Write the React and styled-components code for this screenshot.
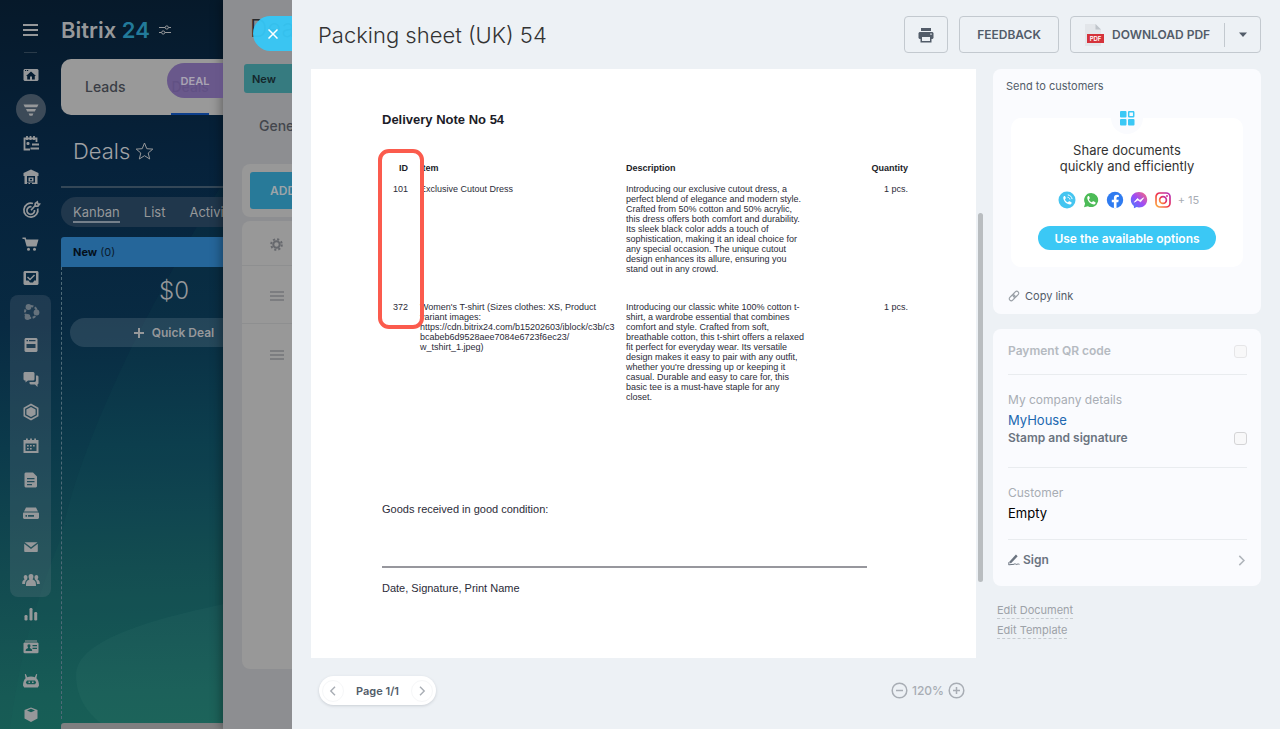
import React from "react";
import styled, { createGlobalStyle, css } from "styled-components";

const GlobalStyle = createGlobalStyle`
  *, *::before, *::after { box-sizing: border-box; }
  html, body { margin: 0; height: 100%; }
  body {
    font-family: Inter, "Liberation Sans", sans-serif;
    overflow: hidden;
    background: #06223a;
  }
  #root { height: 100%; }
  button { font: inherit; color: inherit; background: none; border: 0; padding: 0; cursor: pointer; }
  a { color: inherit; text-decoration: none; }
  h1, h2, p, ul { margin: 0; padding: 0; font-weight: inherit; }
  svg { display: block; flex: none; }
`;

/* ---------- CRM page under the sliders ---------- */

const Page = styled.div`
  position: relative;
  display: flex;
  height: 100vh;
  overflow: hidden;
  color: #96989a;
  background: linear-gradient(178deg, #06192a 0%, #06223b 22%, #082a42 42%, #0b3a4b 58%, #124a50 74%, #175a55 90%, #186055 100%);
`;

const Backdrop = styled.svg`
  position: absolute;
  inset: 0;
  width: 300px;
  height: 100%;
`;

const MenuBar = styled.nav`
  position: relative;
  width: 61px;
  flex: none;
  display: flex;
  flex-direction: column;
  align-items: center;
`;

const MenuToggle = styled.button`
  display: grid;
  place-items: center;
  width: 40px;
  height: 52px;
  padding-top: 8px;
  flex: none;
`;

const MenuRule = styled.hr`
  width: 13px;
  height: 1px;
  margin: 0 0 5px;
  border: 0;
  background: #2a3b4a;
  flex: none;
`;

const MenuGroup = styled.div`
  display: flex;
  flex-direction: column;
  align-items: center;
  flex: none;
  width: 41px;
  height: ${(p) => p.$height}px;
  border-radius: 8px;
  ${(p) => p.$boxed && css`background: rgba(150, 150, 160, 0.17);`}
`;

const MenuLink = styled.a`
  flex: 1;
  display: grid;
  place-items: center;
  opacity: ${(p) => (p.$dim ? 0.6 : 1)};
`;

const IconDisc = styled.span`
  display: grid;
  place-items: center;
  width: 30px;
  height: 30px;
  border-radius: 50%;
  background: ${(p) => (p.$active ? "#3c4a58" : "transparent")};
`;

const Workspace = styled.main`
  position: relative;
  flex: 1;
  min-width: 0;
  display: flex;
  flex-direction: column;
`;

const Brand = styled.div`
  display: flex;
  align-items: center;
  gap: 9px;
  height: 59px;
  font-size: 22px;
  line-height: 26px;
  font-weight: 600;
  span { color: #227a9a; }
`;

const EntityTabs = styled.nav`
  display: flex;
  gap: 46px;
  height: 56px;
  padding: 0 24px;
  border-radius: 10px 0 0 10px;
  background: #999999;
  color: #3a3d45;
`;

const EntityTab = styled.a`
  font-size: 14px;
  font-weight: 500;
  line-height: 56px;
  border-bottom: 2px solid ${(p) => (p.$active ? "#0d3f8c" : "transparent")};
`;

const TitleRow = styled.div`
  display: flex;
  align-items: center;
  gap: 5px;
  height: 73px;
  padding-left: 12px;
  border-bottom: 2px solid #344757;
  h1 { font-size: 22px; line-height: 30px; font-weight: 300; color: #a0a2a5; }
`;

const CreateButton = styled.button`
  width: 120px;
  height: 38px;
  margin-left: 64px;
  border-radius: 4px;
  background: #7b9a10;
`;

const Views = styled.nav`
  display: flex;
  gap: 24px;
  height: 30px;
  margin: 9px 0 10px;
  padding: 0 12px;
  border-radius: 15px 0 0 15px;
  background: #20374c;
  font-size: 13px;
  line-height: 30px;
`;

const ViewLink = styled.a`
  line-height: 24px;
  height: 26px;
  padding-top: 3px;
  border-bottom: 2px solid ${(p) => (p.$active ? "#75808b" : "transparent")};
`;

const Column = styled.section`
  flex: 1;
  width: 226px;
  min-height: 0;
  display: flex;
  flex-direction: column;
`;

const ColumnHead = styled.header`
  height: 30px;
  padding-left: 12px;
  border-radius: 3px 0 0 0;
  background: #25669a;
  color: #0b1b2b;
  font-size: 11px;
  line-height: 30px;
  b { font-weight: 700; color: #04101c; }
`;

const ColumnBody = styled.div`
  flex: 1;
  display: flex;
  flex-direction: column;
  gap: 13px;
  padding: 10px 9px 0 8px;
  border-left: 1px dashed #4f6a78;
`;

const Total = styled.div`
  font-size: 24px;
  line-height: 28px;
  font-weight: 300;
  text-align: center;
`;

const QuickDeal = styled.button`
  display: flex;
  align-items: center;
  justify-content: center;
  gap: 8px;
  height: 29px;
  border-radius: 15px;
  background: rgba(130, 145, 160, 0.23);
  font-size: 12px;
  font-weight: 600;
`;

const ScrollTrack = styled.div`
  height: 6px;
  margin-top: 4px;
  border-radius: 3px 0 0 0;
  background: #7f7f80;
`;

/* ---------- deal slider ---------- */

const DealPanel = styled.aside`
  position: absolute;
  inset: 0 0 0 223px;
  padding: 0 0 60px 19px;
  display: flex;
  flex-direction: column;
  background: #8d8e91;
  box-shadow: -2px 0 10px rgba(0, 0, 0, 0.35);
  color: #43464d;
`;

const SideTab = styled.button`
  position: absolute;
  top: ${(p) => p.$top}px;
  right: 100%;
  height: 35px;
  width: ${(p) => p.$width}px;
  display: grid;
  place-items: center;
  border-radius: 18px 0 0 18px;
  background: ${(p) => p.$tone};
  color: ${(p) => p.$ink};
  font-size: 11px;
  font-weight: 600;
`;

const DealTitle = styled.h2`
  padding: 14px 0 0 8px;
  font-size: 24px;
  line-height: 30px;
  font-weight: 300;
  color: #26282c;
`;

const Stage = styled.div`
  margin: 20px 0 0 2px;
  padding-left: 8px;
  height: 29px;
  border-radius: 3px;
  background: #367b80;
  color: #14262b;
  font-size: 11px;
  font-weight: 600;
  line-height: 30px;
`;

const DealTabs = styled.div`
  padding: 18px 0 0 17px;
  height: 71px;
  font-size: 14px;
  font-weight: 500;
  line-height: 30px;
`;

const DealCard = styled.div`
  flex: ${(p) => (p.$grow ? 1 : "none")};
  padding: ${(p) => (p.$grow ? 0 : 8)}px;
  margin-bottom: ${(p) => (p.$grow ? 0 : 4)}px;
  border-radius: 8px;
  background: #989898;
`;

const AddButton = styled.button`
  width: 160px;
  height: 37px;
  padding-left: 20px;
  border-radius: 3px;
  background: #287a99;
  color: #9da4a8;
  font-size: 12px;
  font-weight: 600;
  text-align: left;
`;

const DealRow = styled.div`
  display: flex;
  align-items: center;
  height: ${(p) => p.$height}px;
  padding: 2px 0 0 28px;
  border-bottom: 1px solid ${(p) => (p.$last ? "transparent" : "#8e8f90")};
  color: ${(p) => (p.$head ? "#66686d" : "#7c7d80")};
`;

/* ---------- document slider ---------- */

const DocPanel = styled.section`
  position: absolute;
  inset: 0 0 0 292px;
  padding: 0 19px;
  display: flex;
  flex-direction: column;
  background: #edf1f5;
  color: #525c69;
`;

const DocHeader = styled.header`
  display: flex;
  align-items: center;
  gap: 11px;
  height: 69px;
  flex: none;
  padding-left: 7px;
  h1 {
    flex: 1;
    font-size: 22px;
    line-height: 30px;
    font-weight: 300;
    color: #333333;
    white-space: nowrap;
  }
`;

const outline = css`
  height: 37px;
  border: 1px solid #c3c9cf;
  border-radius: 4px;
  color: #525c69;
  font-size: 12px;
  font-weight: 600;
  white-space: nowrap;
`;

const OutlineButton = styled.button`
  ${outline}
  width: ${(p) => p.$width}px;
  display: grid;
  place-items: center;
`;

const SplitButton = styled.div`
  ${outline}
  width: 191px;
  display: flex;
  align-items: center;
`;

const SplitMain = styled.button`
  flex: 1;
  display: flex;
  align-items: center;
  gap: 8px;
  padding-left: 13px;
`;

const SplitMore = styled.button`
  display: grid;
  place-items: center;
  width: 36px;
  height: 24px;
  border-left: 1px solid #c3c9cf;
`;

const DocBody = styled.div`
  display: grid;
  grid-template-columns: minmax(0, 1fr) 268px;
  gap: 17px;
  align-items: start;
`;

const SheetFrame = styled.div`
  position: relative;
`;

const Sheet = styled.article`
  min-height: 589px;
  padding: 43px 68px 60px 71px;
  background: #ffffff;
  color: #2b2b38;
  font-family: "Liberation Sans", Arial, sans-serif;
  h2 { font-size: 13px; line-height: 16px; font-weight: 700; color: #1c1c28; }
  p { font-size: 11px; line-height: 14px; }
`;

const SheetScroll = styled.div`
  position: absolute;
  top: 144px;
  right: -7px;
  width: 5px;
  height: 369px;
  border-radius: 3px;
  background: #b9bdc0;
`;

const TableWrap = styled.div`
  position: relative;
  margin: 35px 0 72px;
`;

const Goods = styled.table`
  width: 526px;
  border-collapse: collapse;
  font-size: 9px;
  line-height: 10px;
  white-space: nowrap;
  th, td { padding: 0 0 11px; vertical-align: top; text-align: left; font-weight: 400; }
  th { font-weight: 700; color: #1c1c28; }
  tbody td { padding-bottom: 28px; }
  th:first-child, td:first-child, th:last-child, td:last-child { text-align: right; }
  th:nth-child(2), td:nth-child(2) { padding-left: 12px; }
`;

const Marker = styled.div`
  position: absolute;
  top: -14px;
  left: -4px;
  width: 46px;
  height: 180px;
  border: 4px solid #fb5b4d;
  border-radius: 11px;
`;

const SignLine = styled.hr`
  width: 485px;
  margin: 50px 0 13px;
  border: 0;
  border-top: 2px solid #97979d;
`;

const Side = styled.aside`
  display: flex;
  flex-direction: column;
`;

const Card = styled.section`
  margin-bottom: 15px;
  padding: ${(p) => p.$pad};
  border-radius: 8px;
  background: #fafbfe;
`;

const CardLabel = styled.p`
  font-size: 11px;
  line-height: 14px;
`;

const ShareBox = styled.div`
  position: relative;
  margin: 25px 5px 22px;
  padding: 24px 0 17px;
  display: flex;
  flex-direction: column;
  align-items: center;
  border-radius: 10px;
  background: #ffffff;
  p { font-size: 13px; line-height: 16px; color: #333333; text-align: center; }
`;

const ShareBadge = styled.span`
  position: absolute;
  top: -16px;
  left: calc(50% - 16px);
  width: 32px;
  height: 32px;
  display: grid;
  place-items: center;
  border-radius: 50%;
  background: #fafbfe;
`;

const Channels = styled.div`
  display: flex;
  align-items: center;
  gap: 6px;
  margin: 17px 0;
  padding-left: 3px;
  font-size: 11px;
  line-height: 18px;
  color: #a8adb4;
`;

const ShareButton = styled.button`
  height: 24px;
  width: 178px;
  border-radius: 12px;
  background: #3bc8f5;
  color: #ffffff;
  font-size: 12px;
  font-weight: 600;
`;

const CopyLink = styled.button`
  display: flex;
  align-items: center;
  gap: 5px;
  margin-left: 2px;
  font-size: 11px;
  line-height: 14px;
`;

const Block = styled.div`
  padding: ${(p) => p.$pad};
  border-bottom: 1px solid ${(p) => (p.$last ? "transparent" : "#e9ecef")};
  font-size: 13px;
  line-height: 18px;
`;

const Caption = styled.p`
  color: #a8adb4;
  line-height: 20px;
  font-size: 12px;
`;

const Value = styled.a`
  display: block;
  line-height: 20px;
  color: ${(p) => (p.$link ? "#2067b0" : "#000000")};
`;

const CheckRow = styled.label`
  display: flex;
  align-items: center;
  justify-content: space-between;
  font-size: 12px;
  font-weight: 600;
  line-height: 16px;
  color: ${(p) => (p.$muted ? "#b5bac1" : "#6b7480")};
  input {
    appearance: none;
    width: 13px;
    height: 13px;
    margin: 0;
    border: 1px solid ${(p) => (p.$muted ? "#e6e6e8" : "#d4d4d6")};
    border-radius: 3px;
    background: #f8f8f9;
  }
`;

const SignButton = styled.button`
  display: flex;
  align-items: center;
  gap: 3px;
  width: 100%;
  font-size: 12px;
  font-weight: 600;
  line-height: 16px;
  color: #6b7480;
  span { flex: 1; text-align: left; }
  svg:last-child { color: #b0b5bb; }
`;

const EditLinks = styled.div`
  display: flex;
  flex-direction: column;
  align-items: flex-start;
  gap: 4px;
  padding: 2px 4px;
  font-size: 11px;
  line-height: 15px;
  color: #9da2a8;
  a { border-bottom: 1px dashed #c6cbd0; }
`;

const DocFooter = styled.footer`
  display: flex;
  align-items: center;
  justify-content: space-between;
  margin-top: 18px;
  padding: 0 11px 0 8px;
`;

const Pager = styled.div`
  display: flex;
  align-items: center;
  justify-content: space-between;
  width: 117px;
  height: 29px;
  padding: 0 3px;
  border-radius: 15px;
  background: #ffffff;
  box-shadow: 0 1px 3px rgba(80, 90, 105, 0.22);
  font-size: 11px;
  font-weight: 600;
`;

const PagerArrow = styled.button`
  display: grid;
  place-items: center;
  width: 22px;
  height: 22px;
  border: 1px solid #f6f7f8;
  border-radius: 50%;
  color: #a8adb4;
`;

const Zoom = styled.div`
  display: flex;
  align-items: center;
  gap: 4px;
  font-size: 12px;
  font-weight: 500;
  color: #a8adb4;
`;

/* ---------- icons ---------- */

const glyphs = {
  home: <path fillRule="evenodd" d="M3.500 4h13l1 1v10l-1 1h-13l-1-1V5zM10 6.500l5 4.500h-1.200V14.500H11v-3H9v3H6.200V11H5zM4 5v1h1.200V5zM6 5v1h1.200V5z" />,
  funnel: <path d="M2.500 5.500h15l-1.400 2.800H3.900zM5 10h10l-1.200 2.400H6.200zM7.600 14.500h4.800l-1 2.200H8.600z" />,
  tasks: (
    <g fill="none" stroke="currentColor" strokeWidth="1.800">
      <path d="M9 16.500H3.500v-11h12V9M6 3v4M9.500 3v4M13 3v4M5.500 10.500h3M7 9v3" />
      <path d="M11 11.500h7M9.500 15.500h8.500M9.500 11.500h.1" />
    </g>
  ),
  store: <path fillRule="evenodd" d="M10 2.500 17.500 6v3H16.500v8h-13V9h-1V6zM6 9h8v6.500H6zM7.500 10.500h5V14.500h-5zM9 11.800h2v1.500H9zM6 15h1.500v2H6zM9 15h2v2H9z" />,
  target: (
    <g fill="none" stroke="currentColor" strokeWidth="1.700">
      <path d="M12 3.500A7 7 0 1 0 16.700 8.500" />
      <path d="M10.500 6.800A3.800 3.800 0 1 0 13.500 10" />
      <path d="m10 10.300 4-4.500M14 6l.3-2.600L16.300 2l.4 1.800 1.800.3-1.600 2.100z" />
    </g>
  ),
  cart: (
    <g>
      <path d="M1.500 3.500h3.200l.6 2h12.200l-2 7H5.700L3.500 5H1.500z" />
      <circle cx="7.500" cy="15.300" r="1.500" /><circle cx="13.500" cy="15.300" r="1.500" />
    </g>
  ),
  check: <path fillRule="evenodd" d="M3.500 3h13l1 1v12l-1 1h-13l-1-1V4zM5 5v7.500h2.500L9 14.500h3l1.200-2H15V5zM7 8.500l2 2 4-4 1 1-5 5L6 9.500z" />,
  nodes: (
    <g>
      <circle cx="7.500" cy="5" r="2.900" /><circle cx="15.500" cy="10.500" r="2.900" /><circle cx="6.500" cy="15" r="2.900" />
      <circle cx="10" cy="10" r="6" fill="none" stroke="currentColor" strokeWidth="2" strokeDasharray="3 1.500" />
    </g>
  ),
  feed: <path fillRule="evenodd" d="M4.500 3h11l1 1v12l-1 1h-11l-1-1V4zM5.500 5v1.300h1.500V5zM8 5v1.300h6.500V5zM5.500 9h9v4h-9z" />,
  chat: <path d="M3.500 3h9l1 1v6.500l-1 1H7l-2.500 2v-2h-1l-1-1V4zM15 6.500h1.500l1 1v7l-1 1V18l-2.500-2.500H9.500l-1-1V13H14l1-1z" />,
  hex: (
    <g>
      <path d="m10 2.500 6.700 3.800v7.500L10 17.500l-6.700-3.700V6.300z" fill="none" stroke="currentColor" strokeWidth="1.600" />
      <path d="m10 5 4.600 2.500v5L10 15l-4.600-2.500v-5z" />
    </g>
  ),
  calendar: <path fillRule="evenodd" d="M5 2.500h1.800V4h2.300V2.500h1.800V4h2.300V2.500H15V4h2.500v13h-15V4H5zM4.500 7.500v7.500h11V7.500zM6 9h1.700v1.500H6zM9 9h1.700v1.500H9zM12 9h1.700v1.500H12zM6 12h1.700v1.500H6zM9 12h1.700v1.500H9z" />,
  file: <path fillRule="evenodd" d="M4.500 2.500H12l4 4v10l-1 1H4.500l-1-1v-13zM6 8v1.300h7.500V8zM6 11v1.300h7.500V11zM6 14v1.300h5V14z" />,
  drive: <path fillRule="evenodd" d="M5 4.500h10l2 4H3zM2.500 9.500h15l.5 1V15l-1 1H3l-1-1v-4.500zM4.500 12v1.700H6V12zM7 12v1.700h6V12z" />,
  mail: <path d="M3.500 5.200h13L10 10.300zM3.200 6.700 10 12l6.800-5.300V14.500l-.8.500H4l-.8-.5z" />,
  people: (
    <g>
      <path d="M10 4c2 0 2.700 1.400 2.400 3.300L11.600 9.500c3 1 3.400 2.500 3.400 6.500H5c0-4 .4-5.500 3.400-6.500L7.600 7.300C7.300 5.400 8 4 10 4z" />
      <path d="M4.500 5c1.300 0 2 .9 2 2.500L6 9.500C4.300 11 4.200 12 4 14H1.200c0-3 .5-3.800 2.300-4.600l-.8-1.900c0-1.600.6-2.500 1.800-2.500zM15.500 5c-1.300 0-2 .9-2 2.500l.5 2c1.700 1.500 1.800 2.500 2 4.500h2.800c0-3-.5-3.800-2.300-4.600l.8-1.900c0-1.600-.6-2.500-1.800-2.500z" />
    </g>
  ),
  bars: (
    <g>
      <rect x="3.500" y="11" width="3" height="5.500" rx="1.200" /><rect x="8.500" y="4" width="3" height="12.500" rx="1.200" /><rect x="13.200" y="8" width="3" height="8.500" rx="1.200" />
    </g>
  ),
  contact: <path fillRule="evenodd" d="M4 3.500h12V4.500H4zM3.500 5.500h13l1 .8v9.200l-1 .7h-13l-1-.7V6.300zM8 7.300c-1.200 0-1.700.9-1.500 2l.7 1.700c-1.700.6-2.500 1.200-2.600 3h6.600c-.1-1.800-.9-2.400-2.500-3l.7-1.700c.2-1.100-.2-2-1.400-2zM11.500 8v1.200H16V8zM11.500 10.700v1.200H16v-1.200z" />,
  robot: <path fillRule="evenodd" d="m4.800 3 1.400 3.200c2-1 5.600-1 7.600 0L15.200 3l1 .3-.8 4c1.600 1.400 2.600 4 2.600 7.200l-1.200 2H3.200L2 14.500c0-3.200 1-5.800 2.600-7.200l-.8-4zM6 9.500l-1.200 2L6 13.200h8l1.200-1.700-1.200-2zM7.500 10.500h1.600v1.600H7.500zM11 10.500h1.600v1.600H11z" />,
  box: <path fillRule="evenodd" d="m10 3.500 6.500 2.500V14.500L10 18 3.500 14.500V6zM10 4.800 6 6.400 10 8.300l4-1.900z" />,
};

const Glyph = ({ name }) => (
  <svg width="20" height="20" viewBox="0 0 20 20" fill="currentColor">{glyphs[name]}</svg>
);

const Burger = ({ size, step, weight }) => (
  <svg width={size} height={step * 2 + weight} fill="currentColor">
    {[0, 1, 2].map((i) => <rect key={i} y={i * step} width={size} height={weight} />)}
  </svg>
);

const Chevron = ({ flip, size = 10 }) => (
  <svg width={size} height={size} viewBox="0 0 10 10" fill="none" stroke="currentColor" strokeWidth="1.400">
    <path d={flip ? "M7 .8 2.800 5 7 9.200" : "M3 .8 7.200 5 3 9.200"} />
  </svg>
);

const handset = "M6.300 5.100c-1 .7-1.300 1.700-.8 3.100.9 2.500 2.600 4.300 5.200 5.100 1.200.4 2.400 0 2.900-1.100.2-.5.1-.8-.3-1l-1.700-.9c-.4-.2-.7-.1-1 .3l-.6.7c-1.500-.5-2.500-1.500-3.100-2.900l.7-.8c.2-.3.3-.5.2-.8l-.7-1.600c-.2-.4-.5-.4-.8-.1z";

const CallIcon = () => (
  <svg width="18" height="18" viewBox="0 0 18 18">
    <circle cx="9" cy="9" r="8.500" fill="#45c5f0" />
    <path d={handset} fill="#fff" />
    <path d="M9.500 6.200c1.300.1 2.200 1 2.400 2.300M9.800 3.900c2.300.2 4 1.900 4.300 4.200" fill="none" stroke="#fff" strokeWidth="1" />
  </svg>
);

const WhatsAppIcon = () => (
  <svg width="18" height="18" viewBox="0 0 18 18">
    <path d="M9.200 2a7 7 0 1 1-3.300 13.200L2 16.200l1.100-3.700A7 7 0 0 1 9.200 2z" fill="#4cbb57" />
    <path d={handset} fill="#fff" />
  </svg>
);

const FacebookIcon = () => (
  <svg width="18" height="18" viewBox="0 0 18 18">
    <circle cx="9" cy="9" r="8.200" fill="#2f7bf0" />
    <path d="M7.900 17.100v-5.900H5.800V8.800h2.100V7c0-2.200 1.300-3.300 3.200-3.300l1.700.2v2h-1c-1 0-1.300.6-1.300 1.300v1.600h2.200l-.4 2.400h-1.800v5.900z" fill="#fff" />
  </svg>
);

const MessengerIcon = () => (
  <svg width="18" height="18" viewBox="0 0 18 18">
    <defs>
      <linearGradient id="messenger" x1="0" y1="1" x2="1" y2="0">
        <stop offset="0" stopColor="#3b7dff" /><stop offset=".5" stopColor="#a04cf5" /><stop offset="1" stopColor="#ff6a72" />
      </linearGradient>
    </defs>
    <path d="M9 .9c4.700 0 8.200 3.300 8.200 7.800s-3.500 7.700-8.200 7.700l-2.300-.3-2.800 1.200V15C2 13.500.8 11.400.8 8.700.8 4.200 4.300.9 9 .9z" fill="url(#messenger)" />
    <path d="m4.400 11.200 3-3.700L9.900 9.400l3.700-2.600-3 4-2.700-1.900z" fill="#fff" stroke="#fff" strokeWidth=".8" strokeLinejoin="round" />
  </svg>
);

const InstagramIcon = () => (
  <svg width="18" height="18" viewBox="0 0 18 18" fill="none">
    <defs>
      <linearGradient id="instagram" x1="0" y1="1" x2="1" y2="0">
        <stop offset="0" stopColor="#fdb13f" /><stop offset=".5" stopColor="#f0324b" /><stop offset="1" stopColor="#b132c4" />
      </linearGradient>
    </defs>
    <g stroke="url(#instagram)" strokeWidth="1.700">
      <rect x="2" y="2" width="14" height="14" rx="3.800" />
      <circle cx="9" cy="9" r="3.400" />
    </g>
    <circle cx="13" cy="5" r="1" fill="#d63384" />
  </svg>
);

const PdfIcon = () => (
  <svg width="20" height="22" viewBox="0 0 20 22">
    <path d="M1 0h10.500L17 5.500V22H1z" fill="#e3e6ea" />
    <path d="M11.500 0 17 5.500h-5.500z" fill="#bfc4ca" />
    <rect x="3" y="10" width="17" height="9" fill="#d5333b" />
    <text x="11.500" y="17" fontSize="6" fontWeight="600" fill="#fff" textAnchor="middle" fontFamily="Inter, sans-serif">PDF</text>
  </svg>
);

const PrinterIcon = () => (
  <svg width="16" height="16" viewBox="0 0 16 16" fill="currentColor">
    <path d="M3 1h10v3H3z" />
    <path fillRule="evenodd" d="M1.500 5h13l1 1v5l-1 1H13.500v3.500h-11V12H1.500l-1-1V6zM4 10v4h8v-4zM12.300 6.500v1.300h1.400V6.500z" />
  </svg>
);

const ZoomIcon = ({ plus }) => (
  <svg width="17" height="17" viewBox="0 0 17 17" fill="none" stroke="currentColor" strokeWidth="1.500">
    <circle cx="8.500" cy="8.500" r="7.300" />
    <path d={plus ? "M5 8.500h7M8.500 5v7" : "M5 8.500h7"} />
  </svg>
);

/* ---------- data ---------- */

const menu = [
  { height: 237, items: ["home", "funnel", "tasks", "store", "target", "cart", "check"] },
  { height: 302, boxed: true, items: ["nodes", "feed", "chat", "hex", "calendar", "file", "drive", "mail", "people"] },
  { height: 134, items: ["bars", "contact", "robot", "box"] },
];

const goods = [
  {
    id: 101,
    item: ["Exclusive Cutout Dress"],
    text: [
      "Introducing our exclusive cutout dress, a", "perfect blend of elegance and modern style.",
      "Crafted from 50% cotton and 50% acrylic,", "this dress offers both comfort and durability.",
      "Its sleek black color adds a touch of", "sophistication, making it an ideal choice for",
      "any special occasion. The unique cutout", "design enhances its allure, ensuring you", "stand out in any crowd.",
    ],
  },
  {
    id: 372,
    item: [
      "Women's T-shirt (Sizes clothes: XS, Product", "variant images:",
      "https://cdn.bitrix24.com/b15202603/iblock/c3b/c3", "bcabeb6d9528aee7084e6723f6ec23/", "w_tshirt_1.jpeg)",
    ],
    text: [
      "Introducing our classic white 100% cotton t-", "shirt, a wardrobe essential that combines",
      "comfort and style. Crafted from soft,", "breathable cotton, this t-shirt offers a relaxed",
      "fit perfect for everyday wear. Its versatile", "design makes it easy to pair with any outfit,",
      "whether you're dressing up or keeping it", "casual. Durable and easy to care for, this",
      "basic tee is a must-have staple for any", "closet.",
    ],
  },
];

const Lines = ({ of }) => of.map((line, i) => <React.Fragment key={line}>{i > 0 && <br />}{line}</React.Fragment>);

/* ---------- app ---------- */

export default function App() {
  return (
    <>
      <GlobalStyle />
      <Page>
        <Backdrop viewBox="0 0 300 729" preserveAspectRatio="none">
          <path d="M300 60C190 230 90 400 60 540 20 640 15 700 10 729H300z" fill="#2f8a7a" opacity=".05" />
          <path d="M300 590C150 615 76 640 76 675c0 30 20 45 32 54H300z" fill="#9adbc0" opacity=".04" />
        </Backdrop>

        <MenuBar aria-label="Main menu">
          <MenuToggle aria-label="Toggle menu"><Burger size={15} step={5} weight={2} /></MenuToggle>
          <MenuRule />
          {menu.map((group) => (
            <MenuGroup key={group.height} $height={group.height} $boxed={group.boxed}>
              {group.items.map((name) => (
                <MenuLink key={name} href="#" aria-label={name} $dim={name === "nodes"}>
                  <IconDisc $active={name === "funnel"}><Glyph name={name} /></IconDisc>
                </MenuLink>
              ))}
            </MenuGroup>
          ))}
        </MenuBar>

        <Workspace>
          <Brand>
            <div>Bitrix <span>24</span></div>
            <svg width="12" height="10" viewBox="0 0 12 10" fill="none" stroke="currentColor" strokeWidth="1">
              <path d="M0 2.500h6M9.500 2.500H12M0 7.500h2.500M6 7.500h6" />
              <circle cx="7.800" cy="2.500" r="1.600" /><circle cx="4.200" cy="7.500" r="1.600" />
            </svg>
          </Brand>
          <EntityTabs aria-label="CRM sections">
            <EntityTab href="#">Leads</EntityTab>
            <EntityTab href="#" $active>Deals</EntityTab>
          </EntityTabs>
          <TitleRow>
            <h1>Deals</h1>
            <svg width="19" height="18" viewBox="0 0 19 18" fill="none" stroke="currentColor" strokeWidth="1">
              <path d="m9.500 1 2.300 5.700 6 .4-4.600 3.900 1.500 6-5.200-3.300L4.300 17l1.500-6L1.200 7.100l6-.4z" />
            </svg>
            <CreateButton aria-label="Create" />
          </TitleRow>
          <Views aria-label="Views">
            <ViewLink href="#" $active>Kanban</ViewLink>
            <ViewLink href="#">List</ViewLink>
            <ViewLink href="#">Activities</ViewLink>
          </Views>
          <Column>
            <ColumnHead><b>New</b> (0)</ColumnHead>
            <ColumnBody>
              <Total>$0</Total>
              <QuickDeal>
                <svg width="10" height="10" fill="currentColor"><path d="M4 0h2v4h4v2H6v4H4V6H0V4h4z" /></svg>
                Quick Deal
              </QuickDeal>
            </ColumnBody>
          </Column>
          <ScrollTrack />
        </Workspace>

        <DealPanel aria-label="Deal">
          <SideTab $top={63} $width={56} $tone="rgba(101, 82, 138, 0.92)" $ink="#a9a4b3">DEAL</SideTab>
          <DealTitle>Deal</DealTitle>
          <Stage>New</Stage>
          <DealTabs>General</DealTabs>
          <DealCard><AddButton>ADD PRODUCT</AddButton></DealCard>
          <DealCard $grow>
            <DealRow $height={45} $head>
              <svg width="13" height="13" viewBox="0 0 13 13" fill="none" stroke="currentColor">
                <circle cx="6.500" cy="6.500" r="3.200" strokeWidth="2" />
                <circle cx="6.500" cy="6.500" r="5.300" strokeWidth="2" strokeDasharray="2.100 2.063" />
              </svg>
            </DealRow>
            <DealRow $height={58}><Burger size={14} step={4} weight={2} /></DealRow>
            <DealRow $height={60} $last><Burger size={14} step={4} weight={2} /></DealRow>
          </DealCard>
        </DealPanel>

        <DocPanel aria-label="Document">
          <SideTab $top={16} $width={39} $tone="rgba(54, 200, 248, 0.95)" $ink="#ffffff" aria-label="Close">
            <svg width="10" height="10" fill="none" stroke="currentColor" strokeWidth="1.500"><path d="m.5.5 9 9M9.500.5l-9 9" /></svg>
          </SideTab>

          <DocHeader>
            <h1>Packing sheet (UK) 54</h1>
            <OutlineButton $width={44} aria-label="Print"><PrinterIcon /></OutlineButton>
            <OutlineButton $width={100}>FEEDBACK</OutlineButton>
            <SplitButton>
              <SplitMain><PdfIcon />DOWNLOAD PDF</SplitMain>
              <SplitMore aria-label="More formats">
                <svg width="8" height="5" fill="currentColor"><path d="M0 .5h8L4 5z" /></svg>
              </SplitMore>
            </SplitButton>
          </DocHeader>

          <DocBody>
            <SheetFrame>
              <Sheet>
                <h2>Delivery Note No 54</h2>
                <TableWrap>
                  <Goods>
                    <colgroup>
                      <col width="26" /><col width="218" /><col width="200" /><col />
                    </colgroup>
                    <thead>
                      <tr><th>ID</th><th>Item</th><th>Description</th><th>Quantity</th></tr>
                    </thead>
                    <tbody>
                      {goods.map((row) => (
                        <tr key={row.id}>
                          <td>{row.id}</td>
                          <td><Lines of={row.item} /></td>
                          <td><Lines of={row.text} /></td>
                          <td>1 pcs.</td>
                        </tr>
                      ))}
                    </tbody>
                  </Goods>
                  <Marker />
                </TableWrap>
                <p>Goods received in good condition:</p>
                <SignLine />
                <p>Date, Signature, Print Name</p>
              </Sheet>
              <SheetScroll />
            </SheetFrame>

            <Side>
              <Card $pad="10px 13px 11px">
                <CardLabel>Send to customers</CardLabel>
                <ShareBox>
                  <ShareBadge>
                    <svg width="15" height="15" viewBox="0 0 15 15" fill="#3bc8f5">
                      <rect width="6.500" height="6.500" rx="1" /><rect y="8" width="6.500" height="6.500" rx="1" />
                      <rect x="8" y="8" width="6.500" height="6.500" rx="1" />
                      <rect x="8.700" y=".7" width="5" height="5" rx=".5" fill="none" stroke="#3bc8f5" strokeWidth="1.500" />
                    </svg>
                  </ShareBadge>
                  <p>Share documents<br />quickly and efficiently</p>
                  <Channels>
                    <CallIcon /><WhatsAppIcon /><FacebookIcon /><MessengerIcon /><InstagramIcon />
                    <span>+ 15</span>
                  </Channels>
                  <ShareButton>Use the available options</ShareButton>
                </ShareBox>
                <CopyLink>
                  <svg width="12" height="12" viewBox="0 0 12 12" fill="none" stroke="#9aa0a7" strokeWidth="1.200">
                    <rect x="-3.300" y="-2" width="6.600" height="4" rx="2" transform="translate(4.200 7.800) rotate(-45)" />
                    <rect x="-3.300" y="-2" width="6.600" height="4" rx="2" transform="translate(7.800 4.200) rotate(-45)" />
                  </svg>
                  Copy link
                </CopyLink>
              </Card>

              <Card $pad="0 14px 0 15px">
                <Block $pad="14px 0 15px">
                  <CheckRow $muted>Payment QR code<input type="checkbox" /></CheckRow>
                </Block>
                <Block $pad="15px 0 21px">
                  <Caption>My company details</Caption>
                  <Value href="#" $link>MyHouse</Value>
                  <CheckRow>Stamp and signature<input type="checkbox" /></CheckRow>
                </Block>
                <Block $pad="15px 0 16px">
                  <Caption>Customer</Caption>
                  <Value as="div">Empty</Value>
                </Block>
                <Block $pad="12px 0 17px" $last>
                  <SignButton>
                    <svg width="12" height="12" viewBox="0 0 12 12" fill="none" stroke="currentColor">
                      <path d="M2 8.800 8.800 1.400" strokeWidth="2.400" />
                      <path d="M1 8 .7 10.800 6 10.300c1.500-1.500 1.500.7 3 0s1.500 0 2.500 0" strokeWidth="1" />
                    </svg>
                    <span>Sign</span>
                    <Chevron size={11} />
                  </SignButton>
                </Block>
              </Card>

              <EditLinks>
                <a href="#">Edit Document</a>
                <a href="#">Edit Template</a>
              </EditLinks>
            </Side>
          </DocBody>

          <DocBody>
            <DocFooter>
              <Pager>
                <PagerArrow aria-label="Previous page"><Chevron flip /></PagerArrow>
                Page 1/1
                <PagerArrow aria-label="Next page"><Chevron /></PagerArrow>
              </Pager>
              <Zoom>
                <button aria-label="Zoom out"><ZoomIcon /></button>
                120%
                <button aria-label="Zoom in"><ZoomIcon plus /></button>
              </Zoom>
            </DocFooter>
          </DocBody>
        </DocPanel>
      </Page>
    </>
  );
}
